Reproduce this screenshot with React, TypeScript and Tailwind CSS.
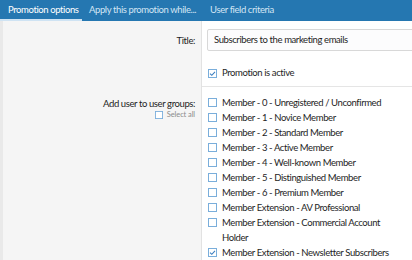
import React from "react";

const groups: { label: string[]; checked?: boolean }[] = [
  { label: ["Member - 0 - Unregistered / Unconfirmed"] },
  { label: ["Member - 1 - Novice Member"] },
  { label: ["Member - 2 - Standard Member"] },
  { label: ["Member - 3 - Active Member"] },
  { label: ["Member - 4 - Well-known Member"] },
  { label: ["Member - 5 - Distinguished Member"] },
  { label: ["Member - 6 - Premium Member"] },
  { label: ["Member Extension - AV Professional"] },
  { label: ["Member Extension - Commercial Account", "Holder"] },
  { label: ["Member Extension - Newsletter Subscribers"], checked: true },
];

function Box({ checked, small }: { checked?: boolean; small?: boolean }) {
  const s = small ? 8 : 9;
  return (
    <svg width={s} height={s} viewBox="0 0 9 9" className="shrink-0">
      <rect x="0.5" y="0.5" width="8" height="8" fill="#fff" stroke="#7aaedb" strokeWidth="1" />
      {checked && (
        <path d="M2 4.6 L3.8 6.3 L7 2.8" fill="none" stroke="#3d7fc0" strokeWidth="1.1" />
      )}
    </svg>
  );
}

export default function App() {
  return (
    <div
      className="w-[412px] h-[260px] overflow-hidden bg-white text-[#1e1e1e] tracking-[-0.4px]"
      style={{ fontFamily: 'Lato, "Noto Sans", sans-serif' }}
    >
      <div className="h-[21px] bg-[#2577b1] flex items-end text-[9.5px] whitespace-nowrap">
        <div className="h-[21px] w-[82px] pl-[8px] flex items-center text-white border-b-[2px] border-[#cfe3f3] pt-[2px]">
          Promotion options
        </div>
        <div className="h-[21px] pl-[7px] pr-[14px] flex items-center text-[#d3e5f4] pb-[1px]">
          Apply this promotion while...
        </div>
        <div className="h-[21px] flex items-center text-[#d3e5f4] pb-[1px]">
          User field criteria
        </div>
      </div>
      <div className="flex h-[239px] border-l-[3px] border-[#e9e9e9]">
        <div className="w-[199px] shrink-0 bg-[#f5f5f5] border-r border-[#e2e2e2] text-[9.5px] text-right pr-[6px]">
          <div className="h-[39px] pt-[13px]">Title:</div>
          <div className="h-[25px]" />
          <div className="pt-[12px] leading-[13px]">Add user to user groups:</div>
          <div className="flex items-center justify-end gap-[4px] text-[7.5px] text-[#8c8c8c] leading-[10px] tracking-[-0.1px]">
            <Box small />
            <span>Select all</span>
          </div>
        </div>
        <div className="flex-1 min-w-0 text-[9.5px] overflow-hidden">
          <div className="pt-[8px] pl-[5px] -mr-[8px]">
            <div className="h-[22px] border border-[#d8d8d8] bg-[#fcfcfd] rounded-[2px] flex items-center pl-[6px]">
              Subscribers to the marketing emails
            </div>
          </div>
          <div className="pl-[6px] pt-[15px] pb-[6px] flex items-center gap-[5px] border-b border-[#e5e5e5]">
            <Box checked />
            <span>Promotion is active</span>
          </div>
          <div className="pl-[6px] pt-[8px] flex flex-col">
            {groups.map((g, i) => (
              <div key={i} className="flex items-start gap-[5px] leading-[15px]">
                <div className="h-[15px] flex items-center">
                  <Box checked={g.checked} />
                </div>
                <div>
                  {g.label.map((l, j) => (
                    <div key={j} className="whitespace-nowrap">{l}</div>
                  ))}
                </div>
              </div>
            ))}
          </div>
        </div>
      </div>
    </div>
  );
}
